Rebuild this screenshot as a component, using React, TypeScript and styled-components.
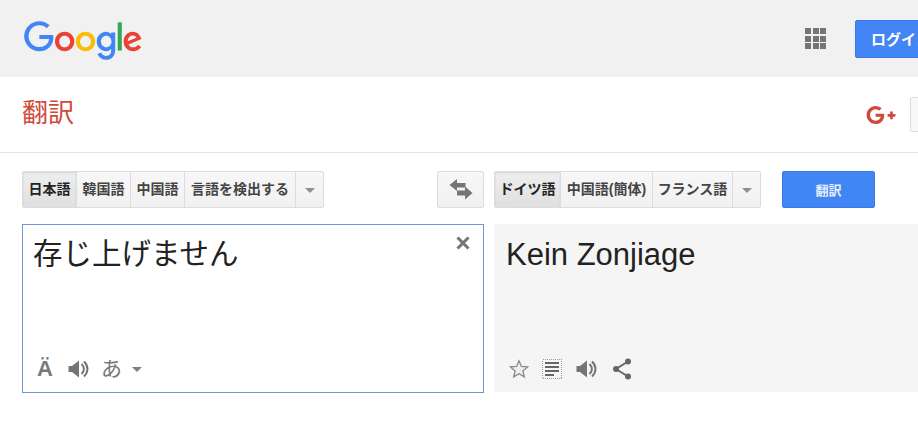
import styled, { createGlobalStyle } from "styled-components";
import { FaGooglePlusG } from "react-icons/fa";

const GlobalStyle = createGlobalStyle`
  html, body {
    margin: 0;
    padding: 0;
    background: #ffffff;
    overflow: hidden;
  }
  body {
    font-family: "Liberation Sans", "Noto Sans CJK JP", Arial, sans-serif;
    color: #222;
  }
`;

const Page = styled.div`
  width: 918px;
  height: 423px;
  overflow: hidden;
`;

const TopBar = styled.header`
  height: 77px;
  background: #f1f1f1;
  display: flex;
  align-items: center;
  padding-left: 24px;
`;

const Logo = styled.svg`
  width: 119px;
  height: 40px;
  flex-shrink: 0;
  margin-top: 4px;
`;

const AppsIcon = styled.div`
  display: grid;
  grid-template-columns: repeat(3, 6px);
  grid-auto-rows: 6px;
  gap: 1.5px;
  margin-left: 662px;
  flex-shrink: 0;

  span {
    background: #757575;
  }
`;

const LoginButton = styled.button`
  flex-shrink: 0;
  width: 100px;
  height: 38px;
  margin-left: 29px;
  padding: 0 0 0 15px;
  text-align: left;
  background: #4285f4;
  border: 1px solid #3b78e7;
  border-radius: 2px;
  color: #fff;
  font: bold 15px "Liberation Sans", "Noto Sans CJK JP", sans-serif;
  white-space: nowrap;
`;

const SubBar = styled.div`
  height: 75px;
  border-bottom: 1px solid #e5e5e5;
  display: flex;
  align-items: center;
  padding-left: 22px;
`;

const Title = styled.div`
  font-size: 26px;
  color: #cf4a3a;
  line-height: 30px;
  width: 844px;
  flex-shrink: 0;
  margin-top: -3px;
`;

const PlusIcon = styled(FaGooglePlusG)`
  width: 30px;
  height: 30px;
  color: #d0483a;
  flex-shrink: 0;
`;

const ShareBox = styled.div`
  width: 60px;
  height: 35px;
  flex-shrink: 0;
  margin-left: 14px;
  box-sizing: border-box;
  border: 1px solid #dcdcdc;
  border-radius: 2px;
  background: #f8f8f8;
`;

const Workspace = styled.main`
  display: grid;
  grid-template-columns: 462px 424px;
  column-gap: 10px;
  row-gap: 16px;
  padding: 18px 0 0 22px;
`;

const Toolbar = styled.div`
  display: flex;
  height: 37px;
`;

const Group = styled.div`
  display: flex;
  height: 37px;
  box-sizing: border-box;
  border: 1px solid #dcdcdc;
  border-radius: 2px;
  background: linear-gradient(#f7f7f7, #f1f1f1);
`;

const LangButton = styled.div<{ $w: number; $active?: boolean }>`
  width: ${({ $w }) => $w}px;
  box-sizing: border-box;
  display: flex;
  align-items: center;
  justify-content: center;
  padding-bottom: 3px;
  font-size: 14px;
  font-weight: bold;
  white-space: nowrap;
  border-right: 1px solid #dcdcdc;
  background: ${({ $active }) => ($active ? "linear-gradient(#eeeeee, #e0e0e0)" : "transparent")};
  box-shadow: ${({ $active }) => ($active ? "inset 0 1px 2px rgba(0, 0, 0, 0.1)" : "none")};
  color: ${({ $active }) => ($active ? "#222" : "#444")};
`;

const ArrowButton = styled.div`
  width: 27px;
  display: flex;
  align-items: center;
  justify-content: center;

  &::after {
    content: "";
    border-left: 5px solid transparent;
    border-right: 5px solid transparent;
    border-top: 5px solid #909090;
    margin-top: 1px;
  }
`;

const SwapButton = styled.div`
  width: 47px;
  height: 37px;
  margin-left: auto;
  box-sizing: border-box;
  border: 1px solid #dcdcdc;
  border-radius: 2px;
  background: linear-gradient(#f7f7f7, #f1f1f1);
  display: flex;
  align-items: center;
  justify-content: center;
`;

const TranslateButton = styled.div`
  width: 93px;
  height: 37px;
  margin-left: 21px;
  box-sizing: border-box;
  background: #4285f4;
  border: 1px solid #3b78e7;
  border-radius: 2px;
  color: #e8effc;
  font-size: 13px;
  font-weight: bold;
  display: flex;
  align-items: center;
  justify-content: center;
`;

const SourcePanel = styled.div`
  position: relative;
  height: 169px;
  box-sizing: border-box;
  border: 1px solid #6d94dc;
  display: flex;
  flex-direction: column;
  padding: 9px 0 0 10px;
`;

const ResultPanel = styled.div`
  height: 168px;
  box-sizing: border-box;
  background: #f5f5f5;
  display: flex;
  flex-direction: column;
  padding: 11px 0 0 12px;
`;

const BigText = styled.div<{ $size: number }>`
  font-size: ${({ $size }) => $size}px;
  line-height: 40px;
  color: #222;
  white-space: nowrap;
`;

const CloseIcon = styled.svg`
  position: absolute;
  top: 10px;
  right: 12px;
  width: 16px;
  height: 16px;
`;

const IconRow = styled.div`
  margin-top: auto;
  height: 24px;
  margin-bottom: 11px;
  display: flex;
  align-items: center;
`;

const Glyph = styled.span<{ $size: number; $ml: number; $bold?: boolean }>`
  font-size: ${({ $size }) => $size}px;
  font-weight: ${({ $bold }) => ($bold ? "bold" : "normal")};
  margin-left: ${({ $ml }) => $ml}px;
  line-height: 24px;
  color: #7a7a7a;
`;

const IconSvg = styled.svg<{ $ml: number }>`
  margin-left: ${({ $ml }) => $ml}px;
  flex-shrink: 0;
`;

const Caret = styled.span`
  margin-left: 10px;
  border-left: 5px solid transparent;
  border-right: 5px solid transparent;
  border-top: 5px solid #808080;
`;

function Speaker({ ml }: { ml: number }) {
  return (
    <IconSvg $ml={ml} width="21" height="20" viewBox="0 0 21 20">
      <path d="M0.5 7h3.5L11 1.5v17L4 13H0.5z" fill="#757575" />
      <path d="M13.5 5c3.2 3 3.2 7 0 10" fill="none" stroke="#757575" strokeWidth="2" />
      <path d="M16 2.5c4.6 4.4 4.6 10.6 0 15" fill="none" stroke="#757575" strokeWidth="2" />
    </IconSvg>
  );
}

export default function App() {
  return (
    <Page>
      <GlobalStyle />
      <TopBar>
        <Logo viewBox="0 0 272 92" preserveAspectRatio="xMinYMid meet">
          <path fill="#EA4335" d="M115.75 47.18c0 12.77-9.99 22.18-22.25 22.18s-22.25-9.41-22.25-22.18C71.25 34.32 81.24 25 93.5 25s22.25 9.32 22.25 22.18zm-9.74 0c0-7.98-5.79-13.44-12.51-13.44S80.99 39.2 80.99 47.18c0 7.9 5.79 13.44 12.51 13.44s12.51-5.55 12.51-13.44z" />
          <path fill="#FBBC05" d="M163.75 47.18c0 12.77-9.99 22.18-22.25 22.18s-22.25-9.41-22.25-22.18c0-12.85 9.99-22.18 22.25-22.18s22.25 9.32 22.25 22.18zm-9.74 0c0-7.98-5.79-13.44-12.51-13.44s-12.51 5.46-12.51 13.44c0 7.9 5.79 13.44 12.51 13.44s12.51-5.55 12.51-13.44z" />
          <path fill="#4285F4" d="M209.75 26.34v39.82c0 16.38-9.66 23.07-21.08 23.07-10.75 0-17.22-7.19-19.66-13.07l8.48-3.53c1.51 3.61 5.21 7.87 11.17 7.87 7.31 0 11.84-4.51 11.84-13v-3.19h-.34c-2.18 2.69-6.38 5.04-11.68 5.04-11.09 0-21.25-9.66-21.25-22.09 0-12.52 10.16-22.26 21.25-22.26 5.29 0 9.49 2.35 11.68 4.96h.34v-3.61h9.25zm-8.56 20.92c0-7.81-5.21-13.52-11.84-13.52-6.72 0-12.35 5.71-12.35 13.52 0 7.73 5.63 13.36 12.35 13.36 6.63 0 11.84-5.63 11.84-13.36z" />
          <path fill="#34A853" d="M225 3v65h-9.5V3h9.5z" />
          <path fill="#EA4335" d="M262.02 54.48l7.56 5.04c-2.44 3.61-8.32 9.83-18.48 9.83-12.6 0-22.01-9.74-22.01-22.18 0-13.19 9.49-22.18 20.92-22.18 11.51 0 17.14 9.16 18.98 14.11l1.01 2.52-29.65 12.28c2.27 4.45 5.8 6.72 10.75 6.72 4.96 0 8.4-2.44 10.92-6.14zm-23.27-7.98l19.82-8.23c-1.09-2.77-4.37-4.7-8.23-4.7-4.95 0-11.84 4.37-11.59 12.93z" />
          <path fill="#4285F4" d="M35.29 41.41V32H67c.31 1.64.47 3.58.47 5.68 0 7.06-1.93 15.79-8.15 22.01-6.05 6.3-13.78 9.66-24.02 9.66C16.32 69.35.36 53.89.36 34.91.36 15.93 16.32.47 35.3.47c10.5 0 17.98 4.12 23.6 9.49l-6.64 6.64c-4.03-3.78-9.49-6.72-16.97-6.72-13.86 0-24.7 11.17-24.7 25.03 0 13.86 10.84 25.03 24.7 25.03 8.99 0 14.11-3.61 17.39-6.89 2.66-2.66 4.41-6.46 5.1-11.65l-22.49.01z" />
        </Logo>
        <AppsIcon>
          {Array.from({ length: 9 }, (_, i) => (
            <span key={i} />
          ))}
        </AppsIcon>
        <LoginButton>ログイン</LoginButton>
      </TopBar>

      <SubBar>
        <Title>翻訳</Title>
        <PlusIcon />
        <ShareBox />
      </SubBar>

      <Workspace>
        <Toolbar>
          <Group>
            <LangButton $w={54} $active>日本語</LangButton>
            <LangButton $w={54}>韓国語</LangButton>
            <LangButton $w={54}>中国語</LangButton>
            <LangButton $w={111}>言語を検出する</LangButton>
            <ArrowButton />
          </Group>
          <SwapButton>
            <svg width="24" height="21" viewBox="0 0 24 21">
              <path d="M0.5 6L8 0v4h8.5v4.5H8V12z" fill="#757575" />
              <path d="M23.5 14L16 7.5v4H8V16.5h8V20.500z" fill="#757575" />
            </svg>
          </SwapButton>
        </Toolbar>
        <Toolbar>
          <Group>
            <LangButton $w={66} $active>ドイツ語</LangButton>
            <LangButton $w={92}>中国語(簡体)</LangButton>
            <LangButton $w={80}>フランス語</LangButton>
            <ArrowButton />
          </Group>
          <TranslateButton>翻訳</TranslateButton>
        </Toolbar>

        <SourcePanel>
          <BigText $size={29.5}>存じ上げません</BigText>
          <CloseIcon viewBox="0 0 16 16">
            <path d="M2.5 2.5l11 11M13.5 2.5l-11 11" stroke="#757575" strokeWidth="3" />
          </CloseIcon>
          <IconRow>
            <Glyph $size={22} $ml={4} $bold>Ä</Glyph>
            <Speaker ml={15} />
            <Glyph $size={21} $ml={12}>あ</Glyph>
            <Caret />
          </IconRow>
        </SourcePanel>

        <ResultPanel>
          <BigText $size={31}>Kein Zonjiage</BigText>
          <IconRow>
            <IconSvg $ml={3} width="20" height="20" viewBox="0 0 20 20">
              <path d="M10 1.8l2.4 5.6 6.1.5-4.6 4 1.4 6L10 14.7l-5.3 3.2 1.4-6-4.6-4 6.1-.5z" fill="#eeeeee" stroke="#8a8a8a" strokeWidth="1.3" />
            </IconSvg>
            <IconSvg $ml={13} width="20" height="20" viewBox="0 0 20 20" shapeRendering="crispEdges">
              <rect x="0.5" y="0.5" width="19" height="19" fill="none" stroke="#999" strokeWidth="1" strokeDasharray="1 1" />
              <path d="M3 4h14M3 8h14M3 12h14M3 16h9" stroke="#666" strokeWidth="2" />
            </IconSvg>
            <Speaker ml={14} />
            <IconSvg $ml={15} width="20" height="22" viewBox="0 0 20 22">
              <path d="M16 3.5L4 11l12 7.5" fill="none" stroke="#666" strokeWidth="2" />
              <circle cx="16" cy="3.5" r="3" fill="#666" />
              <circle cx="4" cy="11" r="3" fill="#666" />
              <circle cx="16" cy="18.5" r="3" fill="#666" />
            </IconSvg>
          </IconRow>
        </ResultPanel>
      </Workspace>
    </Page>
  );
}
